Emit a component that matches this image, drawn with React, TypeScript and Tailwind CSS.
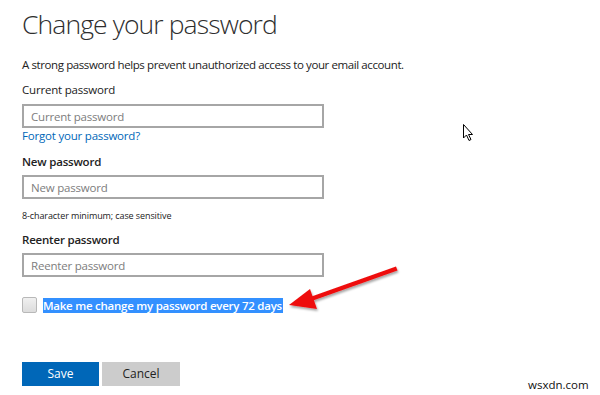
import React from "react";

function Field({ label, placeholder, bold, gap }: { label: string; placeholder: string; bold?: boolean; gap: string }) {
  return (
    <div className="flex flex-col">
      <label className={`text-[11.5px] leading-[16px] tracking-[-0.2px] text-[#222] ${bold ? "font-semibold" : ""}`}>
        {label}
      </label>
      <input
        type="password"
        placeholder={placeholder}
        className={`${gap} h-[24px] w-[302px] border-2 border-[#a6a6a6] bg-white px-[7px] text-[11.5px] tracking-[-0.2px] placeholder:text-[#7d7d7d] outline-none`}
      />
    </div>
  );
}

export default function App() {
  return (
    <div
      className="relative h-[395px] w-[600px] overflow-hidden bg-white text-[#222]"
      style={{ fontFamily: '"Open Sans", "Noto Sans", sans-serif' }}
    >
      <div className="flex flex-col pl-[22px] pt-[6px]">
        <h1 className="text-[26.5px] font-light leading-[36px] tracking-[-0.9px] text-[#2e2e2e]">Change your password</h1>

        <p className="mt-[15px] text-[11.5px] leading-[16px] tracking-[-0.4px]">
          A strong password helps prevent unauthorized access to your email account.
        </p>

        <div className="mt-[9px]">
          <Field label="Current password" placeholder="Current password" gap="mt-[6px]" />
          <a href="#" className="block text-[11.5px] leading-[16px] tracking-[-0.2px] text-[#0067b8]">
            Forgot your password?
          </a>
        </div>

        <div className="mt-[10px]">
          <Field label="New password" placeholder="New password" bold gap="mt-[5px]" />
          <p className="mt-[11px] text-[9px] leading-[12px] tracking-[-0.1px] text-[#222]">
            8-character minimum; case sensitive
          </p>
        </div>

        <div className="mt-[10px]">
          <Field label="Reenter password" placeholder="Reenter password" bold gap="mt-[5px]" />
        </div>

        <div className="mt-[20px] flex items-center gap-[6px]">
          <span className="h-[16px] w-[15px] rounded-[2px] border border-[#b8b8b8] bg-gradient-to-b from-[#f0f0f0] to-[#dcdcdc]" />
          <span className="bg-[#3390ff] pr-[1px] text-[11.5px] font-semibold leading-[15px] tracking-[-0.25px] text-white">
            Make me change my password every 72 days
          </span>
        </div>

        <div className="mt-[49px] flex gap-[3px]">
          <button className="h-[24px] w-[77px] bg-[#0067b8] text-[12px] text-white">Save</button>
          <button className="h-[24px] w-[78px] bg-[#cccccc] text-[12px] text-[#222]">Cancel</button>
        </div>
      </div>

      {/* red annotation arrow */}
      <svg className="absolute left-0 top-0" width="600" height="395" viewBox="0 0 600 395">
        <defs>
          <filter id="sh" x="-20%" y="-20%" width="140%" height="140%">
            <feDropShadow dx="1" dy="2" stdDeviation="1.2" floodColor="#000" floodOpacity="0.35" />
          </filter>
        </defs>
        <g filter="url(#sh)" fill="#ee1111" stroke="none">
          <polygon points="396,266.5 397.5,270.5 313,300.5 311.5,296.5" />
          <polygon points="289,305 310,289 317,309" />
        </g>
      </svg>

      {/* mouse cursor */}
      <svg className="absolute left-[463px] top-[124px]" width="12" height="18" viewBox="0 0 12 18">
        <path d="M0.5 0.5 L0.5 14 L3.5 11 L6 16.5 L8 15.5 L5.5 10.5 L9.5 10.5 Z" fill="#fff" stroke="#000" strokeWidth="1" />
      </svg>

      <span className="absolute left-[528px] top-[377px] text-[11.5px] leading-[16px] text-[#111]">wsxdn.com</span>
    </div>
  );
}
